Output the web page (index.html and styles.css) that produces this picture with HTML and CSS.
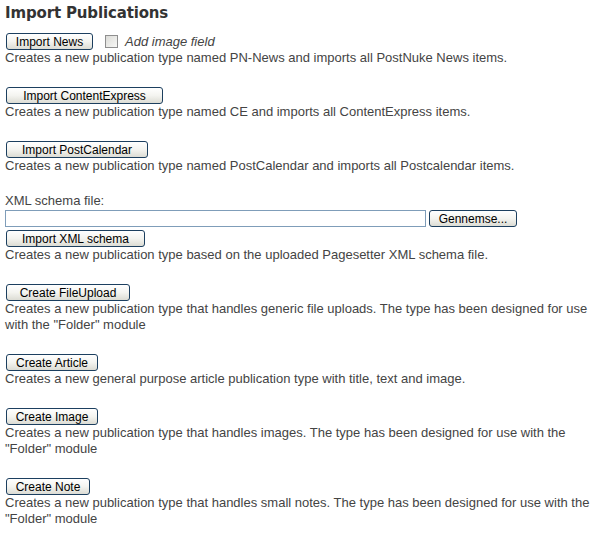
FILE: index.html
```html
<!DOCTYPE html>
<html>
<head>
<meta charset="utf-8">
<link rel="stylesheet" href="styles.css">
</head>
<body>
<div class="page">
  <h2 class="title">Import Publications</h2>

  <div class="item">
    <div class="row">
      <button class="btn w-news">Import News</button>
      <label class="check"><span class="box"></span><em>Add image field</em></label>
    </div>
    <p class="desc">Creates a new publication type named PN-News and imports all PostNuke News items.</p>
  </div>

  <div class="item">
    <div class="row"><button class="btn w-ce">Import ContentExpress</button></div>
    <p class="desc">Creates a new publication type named CE and imports all ContentExpress items.</p>
  </div>

  <div class="item">
    <div class="row"><button class="btn w-pc">Import PostCalendar</button></div>
    <p class="desc">Creates a new publication type named PostCalendar and imports all Postcalendar items.</p>
  </div>

  <div class="item">
    <div class="label">XML schema file:</div>
    <div class="filerow">
      <span class="filebox"></span>
      <button class="btn w-browse">Gennemse...</button>
    </div>
    <div class="row"><button class="btn w-xml">Import XML schema</button></div>
    <p class="desc">Creates a new publication type based on the uploaded Pagesetter XML schema file.</p>
  </div>

  <div class="item">
    <div class="row"><button class="btn w-fu">Create FileUpload</button></div>
    <p class="desc">Creates a new publication type that handles generic file uploads. The type has been designed for use with the "Folder" module</p>
  </div>

  <div class="item">
    <div class="row"><button class="btn w-art">Create Article</button></div>
    <p class="desc">Creates a new general purpose article publication type with title, text and image.</p>
  </div>

  <div class="item">
    <div class="row"><button class="btn w-img">Create Image</button></div>
    <p class="desc">Creates a new publication type that handles images. The type has been designed for use with the "Folder" module</p>
  </div>

  <div class="item">
    <div class="row"><button class="btn w-note">Create Note</button></div>
    <p class="desc">Creates a new publication type that handles small notes. The type has been designed for use with the "Folder" module</p>
  </div>
</div>
</body>
</html>
```

FILE: styles.css
```css
html, body {
  margin: 0;
  padding: 0;
  background: #ffffff;
}
.page {
  padding: 3px 5px 0 5px;
  font-family: "Liberation Sans", Arial, sans-serif;
  font-size: 13px;
  color: #444444;
}
.title {
  font-family: "DejaVu Sans", Verdana, sans-serif;
  font-weight: bold;
  font-size: 15px;
  letter-spacing: -0.15px;
  color: #333333;
  margin: 0 0 10px 0;
  line-height: 20px;
}
.item {
  margin-bottom: 21px;
}
.row {
  display: flex;
  align-items: flex-start;
  gap: 12px;
  height: 17px;
  padding-left: 1px;
}
.btn {
  box-sizing: border-box;
  height: 17px;
  padding: 0;
  border: 1px solid #1c3f5f;
  border-radius: 3px;
  background: linear-gradient(#ffffff 0%, #f4f4f0 50%, #dcdcd4 100%);
  font-family: "Liberation Sans", Arial, sans-serif;
  font-size: 12px;
  color: #000000;
  line-height: 14px;
  text-align: center;
}
.w-news { width: 87px; }
.w-ce { width: 157px; }
.w-pc { width: 142px; }
.w-xml { width: 139px; }
.w-browse { width: 88px; }
.w-fu { width: 124px; }
.w-art { width: 92px; }
.w-img { width: 92px; }
.w-note { width: 84px; }
.check {
  display: flex;
  align-items: center;
  gap: 7px;
  height: 17px;
}
.box {
  box-sizing: border-box;
  width: 13px;
  height: 13px;
  border: 1px solid #8f8f8f;
  background: linear-gradient(135deg, #dcdcd8, #f8f8f6);
}
.check em {
  font-size: 13px;
  color: #444444;
}
.desc {
  margin: 0;
  line-height: 16px;
}
.label {
  line-height: 16px;
  margin-top: -2px;
}
.filerow {
  display: flex;
  align-items: center;
  gap: 3px;
  height: 17px;
  margin: 1px 0 3px 0;
}
.filebox {
  box-sizing: border-box;
  width: 421px;
  height: 17px;
  border: 1px solid #7f9db9;
  background: #ffffff;
}
```
